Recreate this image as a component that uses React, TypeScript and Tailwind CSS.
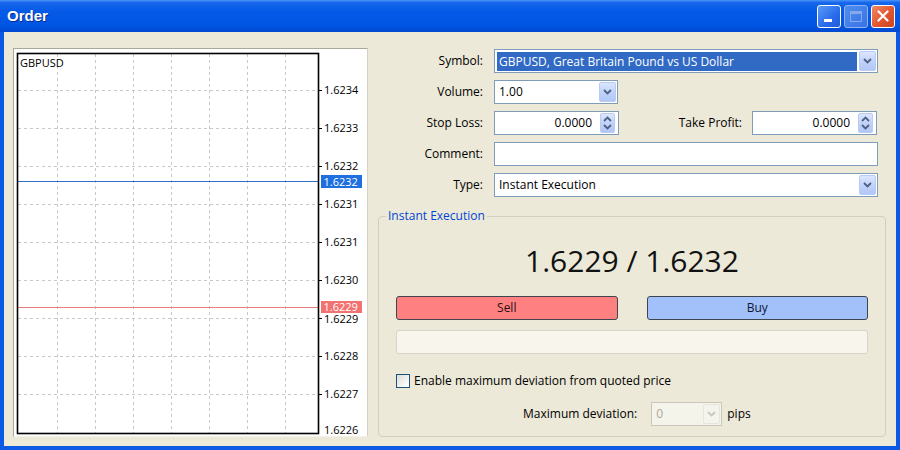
import React from "react";

const F = "'Open Sans', 'Liberation Sans', Arial, sans-serif";

function Chevron({ color = "#4D6185", up = false }: { color?: string; up?: boolean }) {
  return (
    <svg width="9" height="6" viewBox="0 0 9 6">
      <path d={up ? "M1 5 L4.5 1.5 L8 5" : "M1 1 L4.5 4.5 L8 1"} stroke={color} strokeWidth="1.8" fill="none" />
    </svg>
  );
}

function DropBtn({ disabled = false }: { disabled?: boolean }) {
  return (
    <div
      className={
        disabled
          ? "w-[17px] h-[20px] mr-[1px] rounded-[2px] border border-[#E8E6DA] bg-[#F4F3EC] flex items-center justify-center"
          : "w-[17px] h-[20px] mr-[1px] rounded-[2px] border border-[#B7CBF5] bg-[linear-gradient(180deg,#DCE6FD_0%,#C2D3FA_50%,#B2C7F6_100%)] flex items-center justify-center"
      }
    >
      <Chevron color={disabled ? "#C9C7BA" : "#4D6185"} />
    </div>
  );
}

function Spinner() {
  return (
    <div className="w-[15px] h-[20px] mr-[3px] rounded-[2px] border border-[#B7CBF5] bg-[linear-gradient(180deg,#DCE6FD_0%,#C2D3FA_50%,#B2C7F6_100%)] flex flex-col items-center justify-center gap-[2px]">
      <Chevron up />
      <Chevron />
    </div>
  );
}

function Chart() {
  const vx = [57, 95, 133, 171, 209, 247, 285];
  const hy = [90, 128, 166, 204, 242, 280, 318, 356, 394];
  const labels: [string, number][] = [
    ["1.6234", 90],
    ["1.6233", 128],
    ["1.6232", 166],
    ["1.6231", 204],
    ["1.6231", 242],
    ["1.6230", 280],
    ["1.6229", 319],
    ["1.6228", 356],
    ["1.6227", 394],
    ["1.6226", 430],
  ];
  return (
    <svg width="353" height="387" viewBox="0 0 353 387" style={{ fontFamily: F }}>
      <g transform="translate(-14,-49)">
        {vx.map((x) => (
          <line key={x} x1={x + 0.5} y1={54} x2={x + 0.5} y2={433} stroke="#C8C8C8" strokeDasharray="3 3" />
        ))}
        {hy.map((y) => (
          <g key={y}>
            <line x1={18} y1={y + 0.5} x2={318} y2={y + 0.5} stroke="#C8C8C8" strokeDasharray="3 3" />
            <line x1={318} y1={y + 0.5} x2={322} y2={y + 0.5} stroke="#000" />
          </g>
        ))}
        <line x1={18} y1={181.5} x2={318} y2={181.5} stroke="#2F6FCC" />
        <line x1={18} y1={307.5} x2={318} y2={307.5} stroke="#E67C7C" />
        <rect x={17.5} y={53.5} width={301} height={380} fill="none" stroke="#000" strokeWidth={1.6} />
        <text x={20} y={67} fontSize={11} fill="#000">GBPUSD</text>
        {labels.map(([t, y], i) => (
          <text key={i} x={324} y={y + 4} fontSize={11} fill="#000">{t}</text>
        ))}
        <rect x={321} y={175} width={41} height={13} fill="#1F6FE0" />
        <text x={323.5} y={185.5} fontSize={11} fill="#fff">1.6232</text>
        <rect x={321} y={301} width={41} height={12} fill="#F27272" />
        <text x={323.5} y={311} fontSize={11} fill="#fff">1.6229</text>
      </g>
    </svg>
  );
}

export default function App() {
  return (
    <div className="w-[900px] h-[450px] flex flex-col bg-[#0A5AE6] font-['Open_Sans','Liberation_Sans',Arial,sans-serif] text-[12px] text-black">
      {/* Title bar */}
      <div className="h-[32px] shrink-0 flex items-center bg-[linear-gradient(180deg,#4A93F8_0%,#1767EC_8%,#0459E6_35%,#0055E2_80%,#0049D0_100%)]">
        <div className="ml-[7px] text-white font-bold text-[15px] font-['Liberation_Sans',Arial,sans-serif] [text-shadow:1px_1px_0_#0A2F8C]">Order</div>
        <div className="ml-auto mr-[5px] flex items-center gap-[3px]">
          <div className="w-[24px] h-[23px] rounded-[3px] border border-white bg-[linear-gradient(135deg,#5A9BFA_0%,#2A6BEA_60%,#1F5BD8_100%)] flex items-end justify-start pl-[6px] pb-[5px]">
            <div className="w-[8px] h-[3px] bg-white" />
          </div>
          <div className="w-[24px] h-[23px] rounded-[3px] border border-[#8FB3F2] bg-[linear-gradient(135deg,#4F8DF0_0%,#3873E6_100%)] flex items-center justify-center">
            <div className="w-[12px] h-[11px] border border-[#86A9EC] border-t-[3px]" />
          </div>
          <div className="w-[24px] h-[23px] rounded-[3px] border border-white bg-[linear-gradient(135deg,#F08A68_0%,#E2552E_55%,#CC4420_100%)] flex items-center justify-center">
            <svg width="12" height="12" viewBox="0 0 12 12">
              <path d="M1.5 1.5 L10.5 10.5 M10.5 1.5 L1.5 10.5" stroke="#fff" strokeWidth="2.2" strokeLinecap="round" />
            </svg>
          </div>
        </div>
      </div>

      {/* Body */}
      <div className="flex-1 mx-[4px] mb-[4px] bg-[#ECE9D8] flex pt-[16px] pl-[9px] pr-[10px] pb-[9px]">
        {/* Chart panel */}
        <div className="w-[355px] h-[389px] border border-t-[#ACA899] border-l-[#ACA899] border-r-[#D6D3C4] border-b-[#F4F2E8] bg-white">
          <Chart />
        </div>

        {/* Right column */}
        <div className="ml-[10px] w-[508px] flex flex-col">
          <div className="flex flex-col gap-[7px] mt-[1px]">
            {/* Symbol */}
            <div className="flex items-center h-[24px]">
              <div className="w-[105px] text-right">Symbol:</div>
              <div className="ml-[11px] w-[384px] h-[24px] border border-[#7F9DB9] bg-white flex items-center">
                <div className="ml-[2px] flex-1 h-[19px] bg-[#316AC5] text-white pl-[2px] leading-[19px]">
                  GBPUSD, Great Britain Pound vs US Dollar
                </div>
                <div className="ml-[2px]">
                  <DropBtn />
                </div>
              </div>
            </div>
            {/* Volume */}
            <div className="flex items-center h-[24px]">
              <div className="w-[105px] text-right">Volume:</div>
              <div className="ml-[11px] w-[124px] h-[24px] border border-[#7F9DB9] bg-white flex items-center">
                <div className="flex-1 pl-[4px]">1.00</div>
                <DropBtn />
              </div>
            </div>
            {/* Stop loss / Take profit */}
            <div className="flex items-center h-[24px]">
              <div className="w-[105px] text-right">Stop Loss:</div>
              <div className="ml-[11px] w-[125px] h-[24px] border border-[#7F9DB9] bg-white flex items-center">
                <div className="flex-1 text-right pr-[8px]">0.0000</div>
                <Spinner />
              </div>
              <div className="flex-1 text-right">Take Profit:</div>
              <div className="ml-[10px] mr-[9px] w-[125px] h-[24px] border border-[#7F9DB9] bg-white flex items-center">
                <div className="flex-1 text-right pr-[8px]">0.0000</div>
                <Spinner />
              </div>
            </div>
            {/* Comment */}
            <div className="flex items-center h-[24px]">
              <div className="w-[105px] text-right">Comment:</div>
              <div className="ml-[11px] w-[384px] h-[24px] border border-[#7F9DB9] bg-white" />
            </div>
            {/* Type */}
            <div className="flex items-center h-[24px]">
              <div className="w-[105px] text-right">Type:</div>
              <div className="ml-[11px] w-[384px] h-[24px] border border-[#7F9DB9] bg-white flex items-center">
                <div className="flex-1 pl-[4px]">Instant Execution</div>
                <DropBtn />
              </div>
            </div>
          </div>

          <fieldset className="mt-[12px] border border-[#D0D0BF] rounded-[4px] pb-[10px]">
            <legend className="ml-[7px] px-[2px] text-[#0046D5] leading-[14px]">Instant Execution</legend>
            <div className="px-[17px] flex flex-col">
              <div className="mt-[22px] h-[32px] text-center text-[30px] leading-[32px] text-[#111]">1.6229 / 1.6232</div>
              <div className="mt-[19px] flex gap-[29px]">
                <div className="flex-1 h-[24px] rounded-[3px] border border-[#3D4650] bg-[#FF8080] flex items-center justify-center text-[#2A1010]">
                  Sell
                </div>
                <div className="flex-1 h-[24px] rounded-[3px] border border-[#3D4650] bg-[#A2C1FB] flex items-center justify-center text-[#101830]">
                  Buy
                </div>
              </div>
              <div className="mt-[10px] h-[24px] rounded-[3px] border border-[#D8D5C6] bg-[#F7F5EC]" />
              <div className="mt-[20px] h-[14px] flex items-center">
                <div className="w-[14px] h-[14px] border border-[#1C5180] bg-[linear-gradient(135deg,#DCDCD4_0%,#F4F4F0_60%,#FFFFFF_100%)]" />
                <div className="ml-[4px]">Enable maximum deviation from quoted price</div>
              </div>
              <div className="mt-[14px] h-[24px] flex items-center">
                <div className="ml-[127px]">Maximum deviation:</div>
                <div className="ml-[14px] w-[71px] h-[24px] border border-[#C9C7BA] bg-[#F5F4EA] flex items-center">
                  <div className="flex-1 pl-[4px] text-[#ACA899]">0</div>
                  <DropBtn disabled />
                </div>
                <div className="ml-[5px]">pips</div>
              </div>
            </div>
          </fieldset>
        </div>
      </div>
    </div>
  );
}
